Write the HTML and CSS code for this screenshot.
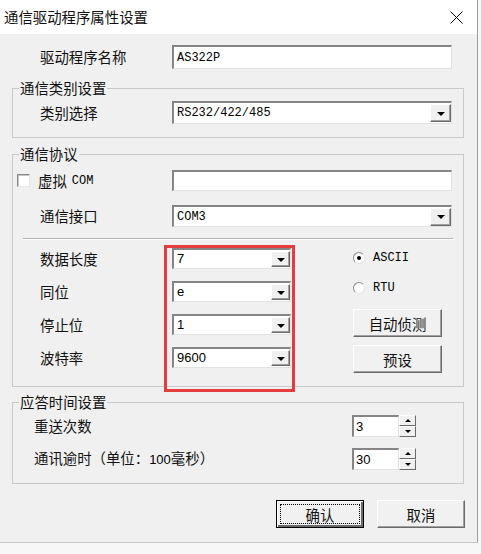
FILE: index.html
```html
<!DOCTYPE html>
<html lang="zh-CN">
<head>
    <meta charset="UTF-8">
    <meta name="viewport" content="width=device-width, initial-scale=1.0">
    <title>通信驱动程序属性设置</title>
    <link rel="stylesheet" href="styles.css">
</head>
<body>
<div class="dialog">
    <div class="titlebar">
        <span>通信驱动程序属性设置</span>
        <svg class="close" width="13" height="13" viewBox="0 0 13 13">
            <path d="M0.5 0.5 L12.5 12.5 M12.5 0.5 L0.5 12.5" stroke="#000" stroke-width="1" fill="none"/>
        </svg>
    </div>

    <div class="row name-row">
        <span class="lbl">驱动程序名称</span>
        <div class="field wide"><span class="mono">AS322P</span></div>
    </div>

    <fieldset class="group g-type">
        <legend>通信类别设置</legend>
        <div class="row ind">
            <span class="lbl">类别选择</span>
            <div class="field combo wide"><span class="mono">RS232/422/485</span><span class="drop"></span></div>
        </div>
    </fieldset>

    <fieldset class="group g-proto">
        <legend>通信协议</legend>
        <div class="row check-row">
            <span class="lbl check-lbl"><span class="checkbox"></span>虚拟 <span class="mono com">COM</span></span>
            <div class="field wide"></div>
        </div>
        <div class="row ind port-row">
            <span class="lbl">通信接口</span>
            <div class="field combo wide"><span class="mono">COM3</span><span class="drop"></span></div>
        </div>
        <div class="sep"></div>
        <div class="serial">
            <div class="serial-left">
                <div class="row ind small">
                    <span class="lbl">数据长度</span>
                    <div class="field combo short"><span class="num">7</span><span class="drop"></span></div>
                </div>
                <div class="row ind small">
                    <span class="lbl">同位</span>
                    <div class="field combo short"><span class="num">e</span><span class="drop"></span></div>
                </div>
                <div class="row ind small">
                    <span class="lbl">停止位</span>
                    <div class="field combo short"><span class="num">1</span><span class="drop"></span></div>
                </div>
                <div class="row ind small">
                    <span class="lbl">波特率</span>
                    <div class="field combo short"><span class="num">9600</span><span class="drop"></span></div>
                </div>
            </div>
            <div class="serial-right">
                <div class="radio-row"><span class="radio on"></span><span class="mono">ASCII</span></div>
                <div class="radio-row rtu"><span class="radio"></span><span class="mono">RTU</span></div>
                <button class="btn side-btn detect">自动侦测</button>
                <button class="btn side-btn">预设</button>
            </div>
        </div>
    </fieldset>

    <fieldset class="group g-time">
        <legend>应答时间设置</legend>
        <div class="row time-row">
            <span class="lbl">重送次数</span>
            <div class="spin">
                <div class="field spin-field"><span class="num">3</span></div>
                <div class="spin-btns"><span class="sb up"></span><span class="sb down"></span></div>
            </div>
        </div>
        <div class="row time-row second">
            <span class="lbl">通讯逾时（单位：<span class="num">100</span>毫秒）</span>
            <div class="spin">
                <div class="field spin-field"><span class="num">30</span></div>
                <div class="spin-btns"><span class="sb up"></span><span class="sb down"></span></div>
            </div>
        </div>
    </fieldset>

    <div class="actions">
        <button class="btn action-btn default">确认</button>
        <button class="btn action-btn">取消</button>
    </div>

    <div class="highlight"></div>
</div>
</body>
</html>
```

FILE: styles.css
```css
body {
    margin: 0;
    background-color: #f7f7f7;
    font-family: "Noto Sans CJK SC", "Noto Sans", sans-serif;
    font-size: 14.4px;
    line-height: 18px;
    color: #111;
}
.dialog {
    position: relative;
    width: 477px;
    height: 542px;
    background-color: #f0f0f0;
    border-right: 1px solid #9c9c9c;
    border-bottom: 1px solid #c6c6c6;
    display: flex;
    flex-direction: column;
}
.titlebar {
    height: 34px;
    background-color: #fff;
    display: flex;
    align-items: center;
    justify-content: space-between;
    padding: 0 14px 0 4px;
    flex-shrink: 0;
}
.mono {
    font-family: "Liberation Mono", monospace;
    font-size: 12px;
    color: #000;
}
.num {
    font-family: "Liberation Sans", sans-serif;
    font-size: 13px;
    color: #000;
}
.row {
    display: flex;
    align-items: center;
}
.lbl {
    width: 132px;
    flex-shrink: 0;
    white-space: nowrap;
}
.name-row {
    margin-top: 11px;
    padding-left: 40px;
}
.ind {
    padding-left: 27px;
}

/* sunken edit / combo boxes */
.field {
    box-sizing: border-box;
    height: 24px;
    background-color: #fff;
    border-style: solid;
    border-width: 2px 1px 1px 2px;
    border-color: #858585 #e2e2e2 #e2e2e2 #858585;
    display: flex;
    align-items: center;
    padding-left: 3px;
}
.wide {
    width: 280px;
}
.combo {
    height: 23px;
}
.drop {
    box-sizing: border-box;
    margin-left: auto;
    width: 21px;
    height: 18px;
    background-color: #f0f0f0;
    border: 1px solid;
    border-color: #fff #6a6a6a #6a6a6a #fff;
    box-shadow: inset -1px -1px #a0a0a0;
    display: flex;
    align-items: center;
    justify-content: center;
}
.drop::after {
    content: "";
    border-top: 4px solid #000;
    border-left: 4px solid transparent;
    border-right: 4px solid transparent;
    margin-top: 1px;
}

/* group boxes */
.group {
    margin: 0 13px 0 12px;
    padding: 0;
    border: 1px solid #c9c9c9;
    min-width: 0;
}
.group legend {
    margin-left: 6px;
    padding: 0 1px;
    line-height: 16px;
}
.g-type {
    margin-top: 11px;
    padding: 5px 0 13px;
}
.g-proto {
    margin-top: 8px;
    padding: 8px 0 13px;
}
.g-time {
    margin-top: 7px;
    padding: 5px 0 13px;
}

.check-row {
    padding-left: 4px;
}
.check-row .field {
    height: 21px;
}
.check-lbl {
    width: 155px;
    display: flex;
    align-items: center;
}
.checkbox {
    box-sizing: border-box;
    width: 13px;
    height: 13px;
    background-color: #fff;
    border: 1px solid;
    border-color: #8a8a8a #e6e6e6 #e6e6e6 #8a8a8a;
    box-shadow: inset 1px 1px #c4c4c4;
    margin-right: 8px;
}
.com {
    margin-left: 5px;
}
.port-row {
    margin-top: 14px;
}
.port-row .field {
    height: 22px;
}
.sep {
    margin: 11px 0 0 10px;
    width: 430px;
    border-top: 1px solid #b4b4b4;
    border-bottom: 1px solid #fff;
}

.serial {
    display: flex;
    align-items: flex-start;
    margin-top: 8px;
}
.serial-left {
    display: flex;
    flex-direction: column;
    gap: 12px;
}
.short {
    width: 119px;
    height: 21px;
}
.short .drop {
    width: 19px;
    height: 16px;
}
.serial-right {
    margin-left: 62px;
    display: flex;
    flex-direction: column;
}
.radio-row {
    height: 20px;
    display: flex;
    align-items: center;
    gap: 8px;
}
.rtu {
    margin-top: 10px;
}
.radio {
    box-sizing: border-box;
    width: 12px;
    height: 12px;
    border-radius: 50%;
    background-color: #fff;
    border: 1px solid;
    border-color: #8a8a8a #e3e3e3 #e3e3e3 #8a8a8a;
    display: flex;
    align-items: center;
    justify-content: center;
}
.radio.on::after {
    content: "";
    width: 4px;
    height: 4px;
    border-radius: 50%;
    background-color: #000;
}

/* push buttons */
.btn {
    box-sizing: border-box;
    font-family: inherit;
    font-size: 14.4px;
    color: #111;
    background-color: #f1f1f1;
    border: 1px solid;
    border-color: #fff #6a6a6a #6a6a6a #fff;
    box-shadow: inset -1px -1px #a0a0a0;
    padding: 0;
    position: relative;
}
.side-btn {
    width: 89px;
    height: 28px;
}
.detect {
    margin-top: 11px;
    margin-bottom: 8px;
}

.time-row {
    padding-left: 21px;
}
.time-row .lbl {
    width: 318px;
}
.second {
    margin-top: 11px;
}
.spin {
    display: flex;
}
.spin-field {
    width: 47px;
    height: 22px;
    padding-left: 2px;
}
.spin-btns {
    display: flex;
    flex-direction: column;
    width: 17px;
    height: 22px;
}
.sb {
    box-sizing: border-box;
    height: 11px;
    background-color: #f0f0f0;
    border: 1px solid;
    border-color: #fff #6a6a6a #6a6a6a #fff;
    display: flex;
    align-items: center;
    justify-content: center;
}
.sb.up::after {
    content: "";
    border-bottom: 3px solid #000;
    border-left: 3px solid transparent;
    border-right: 3px solid transparent;
}
.sb.down::after {
    content: "";
    border-top: 3px solid #000;
    border-left: 3px solid transparent;
    border-right: 3px solid transparent;
}

.actions {
    display: flex;
    justify-content: flex-end;
    gap: 13px;
    margin-top: 16px;
    padding-right: 12px;
}
.action-btn {
    width: 88px;
    height: 28px;
}
.default {
    border-color: #000;
    box-shadow: inset 1px 1px #fff, inset -2px -2px #6a6a6a;
}
.default::after {
    content: "";
    position: absolute;
    inset: 3px;
    border: 1px dotted #000;
}

/* red annotation frame */
.highlight {
    position: absolute;
    left: 164px;
    top: 245px;
    width: 125px;
    height: 141px;
    border: 3px solid #e43d3d;
}
```
